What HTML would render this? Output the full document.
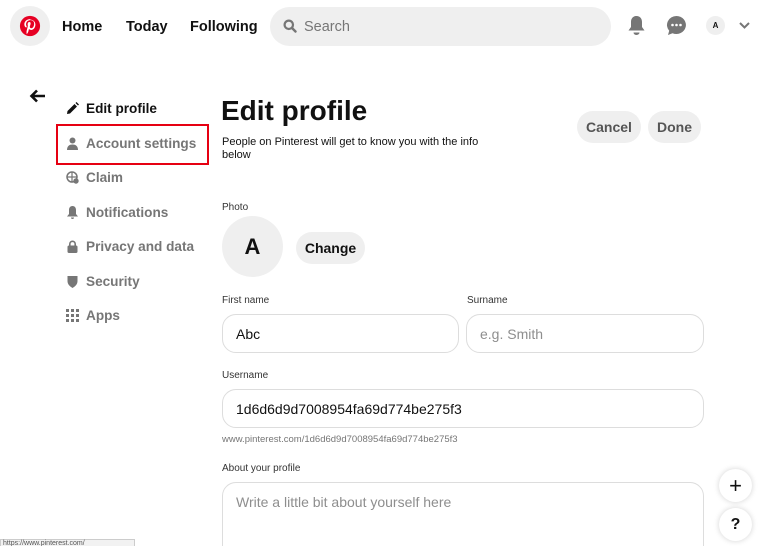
<!DOCTYPE html>
<html><head><style>
*{box-sizing:border-box;margin:0;padding:0}
html,body{width:768px;height:546px;overflow:hidden}
body{background:#fff;font-family:"Liberation Sans",Arial,sans-serif;color:#111;position:relative}
.a{position:absolute}
.nav{font-weight:bold;font-size:14.5px;top:19px}
.side{left:66px;font-size:13.6px;font-weight:bold;color:#767676;display:flex;align-items:center;gap:7px}
.side svg{width:13px;height:13px}
.lbl{font-size:10px;color:#333}
.inp{border:1.5px solid #ddd;border-radius:14px;height:39px;font-size:14px;padding:11px 13px;color:#111}
.btn{background:#efefef;border-radius:20px;font-weight:bold;font-size:14px;color:#555;text-align:center}
</style></head><body>
<div class="a" style="left:10px;top:6px;width:40px;height:40px;border-radius:50%;background:#efefef"></div>
<svg class="a" style="left:19px;top:15px" width="22" height="22" viewBox="0 0 24 24"><circle cx="12" cy="12" r="11" fill="#e60023"/><path d="M12.3 4.5c-4.3 0-6.5 3-6.5 5.6 0 1.6.6 3 1.9 3.5.2.1.4 0 .5-.2l.2-.8c.1-.2 0-.3-.1-.5-.4-.5-.6-1.1-.6-1.9 0-2.5 1.8-4.6 4.8-4.6 2.6 0 4 1.6 4 3.7 0 2.8-1.2 5.2-3.1 5.2-1 0-1.8-.9-1.6-1.9.3-1.2.9-2.6.9-3.5 0-.8-.4-1.5-1.4-1.5-1.1 0-1.9 1.1-1.9 2.6 0 .9.3 1.6.3 1.6L8.4 17c-.4 1.6 0 3.5 0 3.7h.3c.1-.2 1.3-1.6 1.600-3.1l.6-2.4c.3.6 1.200 1.1 2.2 1.1 2.9 0 4.8-2.6 4.8-6.100 0-2.7-2.300-5.2-5.600-5.200z" fill="#fff"/></svg>
<div class="a nav" style="left:62px">Home</div>
<div class="a nav" style="left:126px">Today</div>
<div class="a nav" style="left:190px">Following</div>
<div class="a" style="left:270px;top:7px;width:341px;height:39px;border-radius:20px;background:#efefef"></div>
<svg class="a" style="left:283px;top:19px" width="14" height="14" viewBox="0 0 14 14"><circle cx="5.8" cy="5.8" r="4.2" stroke="#767676" stroke-width="2.2" fill="none"/><path d="M9 9l3.5 3.5" stroke="#767676" stroke-width="2.4" stroke-linecap="round"/></svg>
<div class="a" style="left:304px;top:19px;font-size:14.5px;color:#767676">Search</div>
<svg class="a" style="left:627px;top:15px" width="19" height="21" viewBox="0 0 19 21"><path d="M9.5 1c-3.500 0-5.500 2.500-5.500 6v5l-2.500 3.500h16L15 12V7c0-3.500-2-6-5.500-6z" fill="#767676"/><path d="M6.500 17.500a3 2.500 0 0 0 6 0z" fill="#767676"/></svg>
<svg class="a" style="left:666px;top:15px" width="21" height="21" viewBox="0 0 21 21"><path d="M10.5 1a9.5 9 0 1 1-4 17.2L2 20l1.200-4.200A9.5 9 0 0 1 10.5 1z" fill="#767676"/><circle cx="6.500" cy="10" r="1.300" fill="#fff"/><circle cx="10.500" cy="10" r="1.300" fill="#fff"/><circle cx="14.500" cy="10" r="1.300" fill="#fff"/></svg>
<div class="a" style="left:706px;top:16px;width:19px;height:19px;border-radius:50%;background:#efefef;font-size:8px;font-weight:bold;text-align:center;line-height:19px">A</div>
<svg class="a" style="left:739px;top:22px" width="11" height="7" viewBox="0 0 11 7"><path d="M1 1l4.500 4.500L10 1" stroke="#767676" stroke-width="2" fill="none"/></svg>

<svg class="a" style="left:29px;top:89px" width="17" height="14" viewBox="0 0 17 14"><path d="M16 7H3M8 1.500L2.500 7 8 12.500" stroke="#111" stroke-width="2.600" fill="none"/></svg>
<div class="a side" style="top:101px;color:#111"><svg viewBox="0 0 13 13"><path d="M1 12l.5-3 7-7 2.500 2.500-7 7z M9.500 1l1-1 2.500 2.500-1 1z" fill="#111"/></svg>Edit profile</div>
<div class="a" style="left:56px;top:124px;width:153px;height:41px;border:2px solid #e60012"></div>
<div class="a side" style="top:136px"><svg viewBox="0 0 13 13"><circle cx="6.500" cy="3.500" r="3" fill="#767676"/><path d="M1 13c0-4 2.500-5.500 5.500-5.500S12 9 12 13z" fill="#767676"/></svg>Account settings</div>
<div class="a side" style="top:170px"><svg viewBox="0 0 13 13"><circle cx="6" cy="6" r="5" stroke="#767676" stroke-width="1.500" fill="none"/><path d="M1 6h10M6 1v10" stroke="#767676" stroke-width="1.200"/><circle cx="10" cy="10" r="2.700" fill="#767676"/></svg>Claim</div>
<div class="a side" style="top:205px"><svg viewBox="0 0 13 13"><path d="M6.500 0C4 0 3 2 3 4v4l-2 2.500h11L10 8V4c0-2-1-4-3.500-4z M5 11.500h3a1.500 1.500 0 0 1-3 0z" fill="#767676"/></svg>Notifications</div>
<div class="a side" style="top:239px"><svg viewBox="0 0 13 13"><rect x="1.500" y="5.500" width="10" height="7.500" rx="1.500" fill="#767676"/><path d="M3.800 6V4a2.700 2.700 0 0 1 5.400 0v2" stroke="#767676" stroke-width="1.600" fill="none"/></svg>Privacy and data</div>
<div class="a side" style="top:274px"><svg viewBox="0 0 13 13"><path d="M1.500 1h10v5c0 3.500-2.500 5.500-5 7-2.500-1.500-5-3.500-5-7z" fill="#767676"/></svg>Security</div>
<div class="a side" style="top:308px"><svg viewBox="0 0 13 13" fill="#767676"><rect x="0" y="0" width="3" height="3"/><rect x="5" y="0" width="3" height="3"/><rect x="10" y="0" width="3" height="3"/><rect x="0" y="5" width="3" height="3"/><rect x="5" y="5" width="3" height="3"/><rect x="10" y="5" width="3" height="3"/><rect x="0" y="10" width="3" height="3"/><rect x="5" y="10" width="3" height="3"/><rect x="10" y="10" width="3" height="3"/></svg>Apps</div>

<div class="a" style="left:221px;top:95px;font-size:28px;font-weight:bold">Edit profile</div>
<div class="a" style="left:222px;top:136px;font-size:11px;line-height:13px;width:300px">People on Pinterest will get to know you with the info<br>below</div>
<div class="a btn" style="left:577px;top:111px;width:64px;height:32px;line-height:32px">Cancel</div>
<div class="a btn" style="left:648px;top:111px;width:53px;height:32px;line-height:32px">Done</div>

<div class="a lbl" style="left:222px;top:202px">Photo</div>
<div class="a" style="left:222px;top:216px;width:61px;height:61px;border-radius:50%;background:#efefef;font-size:22px;font-weight:bold;text-align:center;line-height:61px">A</div>
<div class="a btn" style="left:296px;top:232px;width:69px;height:32px;line-height:32px;color:#111">Change</div>

<div class="a lbl" style="left:222px;top:295px">First name</div>
<div class="a lbl" style="left:467px;top:295px">Surname</div>
<div class="a inp" style="left:222px;top:314px;width:237px">Abc</div>
<div class="a inp" style="left:466px;top:314px;width:238px;color:#8e8e8e">e.g. Smith</div>
<div class="a lbl" style="left:222px;top:370px">Username</div>
<div class="a inp" style="left:222px;top:389px;width:482px">1d6d6d9d7008954fa69d774be275f3</div>
<div class="a" style="left:222px;top:434px;font-size:9.5px;color:#767676">www.pinterest.com/1d6d6d9d7008954fa69d774be275f3</div>
<div class="a lbl" style="left:222px;top:463px">About your profile</div>
<div class="a inp" style="left:222px;top:482px;width:482px;height:80px;color:#8e8e8e">Write a little bit about yourself here</div>

<div class="a" style="left:719px;top:469px;width:33px;height:33px;border-radius:50%;background:#fff;box-shadow:0 0 6px rgba(0,0,0,.18);text-align:center;line-height:33px;font-size:22px">+</div>
<div class="a" style="left:719px;top:508px;width:33px;height:33px;border-radius:50%;background:#fff;box-shadow:0 0 6px rgba(0,0,0,.18);text-align:center;line-height:33px;font-size:16px;font-weight:bold">?</div>
<div class="a" style="left:0;top:539px;width:135px;height:10px;background:#f2f2f2;border:1px solid #ccc;font-size:7px;color:#555;padding-left:2px">https://www.pinterest.com/</div>
</body></html>
